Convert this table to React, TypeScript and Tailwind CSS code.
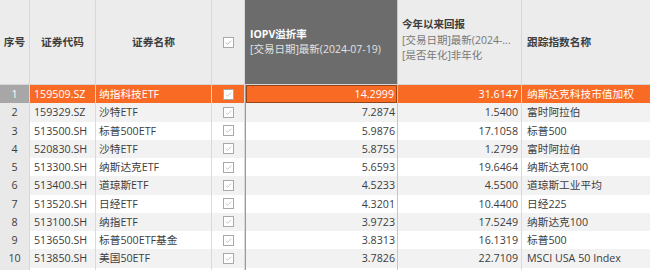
import React from "react";

const rows = [
  ["1", "159509.SZ", "纳指科技ETF", "14.2999", "31.6147", "纳斯达克科技市值加权"],
  ["2", "159329.SZ", "沙特ETF", "7.2874", "1.5400", "富时阿拉伯"],
  ["3", "513500.SH", "标普500ETF", "5.9876", "17.1058", "标普500"],
  ["4", "520830.SH", "沙特ETF", "5.8755", "1.2799", "富时阿拉伯"],
  ["5", "513300.SH", "纳斯达克ETF", "5.6593", "19.6464", "纳斯达克100"],
  ["6", "513400.SH", "道琼斯ETF", "4.5233", "4.5500", "道琼斯工业平均"],
  ["7", "513520.SH", "日经ETF", "4.3201", "10.4400", "日经225"],
  ["8", "513100.SH", "纳指ETF", "3.9723", "17.5249", "纳斯达克100"],
  ["9", "513650.SH", "标普500ETF基金", "3.8313", "16.1319", "标普500"],
  ["10", "513850.SH", "美国50ETF", "3.7826", "22.7109", "MSCI USA 50 Index"],
  ["", "", "", "", "", ""],
];

function Check({ faint }: { faint?: boolean }) {
  return (
    <div className="w-[11px] h-[11px] border border-[#a9a9a9] bg-white flex items-center justify-center">
      <svg width="9" height="9" viewBox="0 0 9 9">
        <path d="M1.8 4.6 L3.6 6.3 L7.2 2.6" fill="none" stroke={faint ? "#c4c4c4" : "#b3b3b3"} strokeWidth="1" />
      </svg>
    </div>
  );
}

export default function App() {
  return (
    <div
      className="w-[650px] h-[270px] overflow-hidden bg-white text-[10.7px] text-[#3d3d3d]"
      style={{ fontFamily: '"Open Sans", "Noto Sans CJK SC", sans-serif' }}
    >
      {/* header */}
      <div className="flex h-[85px] bg-[#ececec] border-b border-[#d6d6d6]">
        <div className="w-[30px] border-r border-[#d8d8d8] flex items-center justify-center font-bold">序号</div>
        <div className="w-[66px] border-r border-[#d8d8d8] flex items-center justify-center font-bold">证券代码</div>
        <div className="w-[116px] border-r border-[#d8d8d8] flex items-center justify-center font-bold">证券名称</div>
        <div className="w-[33px] border-r border-[#d8d8d8] flex items-center justify-center">
          <Check />
        </div>
        <div className="w-[153px] bg-[#6c6c6c] border-r border-[#c8c8c8] flex flex-col justify-center pl-[5px] text-[10.5px] leading-[15.5px] text-white">
          <div className="font-bold">IOPV溢折率</div>
          <div className="text-[#e2e2e2]">[交易日期]最新(2024-07-19)</div>
        </div>
        <div className="w-[124px] border-r border-[#d8d8d8] flex flex-col justify-center pl-[4px] text-[10.5px] leading-[15.5px] pb-[3px]">
          <div className="font-bold">今年以来回报</div>
          <div className="text-[#777]">[交易日期]最新(2024-...</div>
          <div className="text-[#777]">[是否年化]非年化</div>
        </div>
        <div className="flex-1 flex items-center pl-[5px] font-bold">跟踪指数名称</div>
      </div>
      {/* body */}
      {rows.map((r, i) => {
        const sel = i === 0;
        const stripe = i % 2 === 1;
        const rowBg = sel ? "bg-[#f96b25] text-white" : stripe ? "bg-[#f2f2f2]" : "bg-white";
        return (
          <div key={i} className={`flex h-[18.25px] items-center ${rowBg}`}>
            <div
              className={`w-[30px] h-full border-r border-[#d8d8d8] flex items-center justify-center ${
                sel ? "bg-[#a7a7a7] text-white" : "bg-[#e9e9e9]"
              }`}
            >
              {r[0]}
            </div>
            <div className="w-[66px] h-full border-r border-[#dadada] flex items-center pl-[4px]">{r[1]}</div>
            <div className="w-[116px] h-full border-r border-[#dadada] flex items-center pl-[3px]">{r[2]}</div>
            <div className="w-[33px] h-full border-r border-[#dadada] flex items-center justify-center">
              {i < 10 && <Check faint />}
            </div>
            <div className="w-[153px] h-full border-l border-[#9a9a9a] border-r border-r-[#c6c6c6] flex items-center">
              <div
                className={`w-full h-full flex items-center justify-end pr-[2px] ${
                  sel ? "border border-[#95431a]" : ""
                }`}
              >
                {r[3]}
              </div>
            </div>
            <div className="w-[124px] h-full border-r border-[#dadada] flex items-center justify-end pr-[3px]">{r[4]}</div>
            <div className="flex-1 h-full flex items-center pl-[5px] whitespace-nowrap">{r[5]}</div>
          </div>
        );
      })}
    </div>
  );
}
